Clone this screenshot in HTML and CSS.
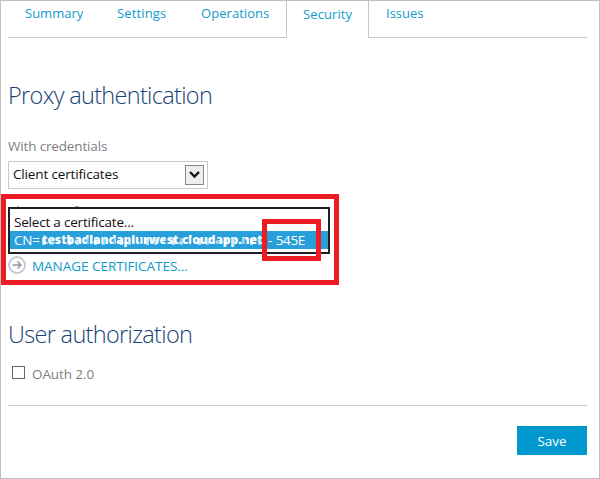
FILE: index.html
```html
<!DOCTYPE html>
<html lang="en">
<head>
<meta charset="utf-8">
<title>Proxy security</title>
<link rel="stylesheet" href="styles.css">
</head>
<body>
<main class="page">
  <nav class="tabs">
    <a class="tab summary">Summary</a>
    <a class="tab settings">Settings</a>
    <a class="tab operations">Operations</a>
    <a class="tab active">Security</a>
    <a class="tab issues">Issues</a>
  </nav>
  <section class="proxy">
    <h1>Proxy authentication</h1>
    <div class="label">With credentials</div>
    <div class="select"><span>Client certificates</span>
      <span class="arrow"><svg width="17" height="18" viewBox="0 0 17 18"><path d="M4 6 8.5 10.500 13 6" fill="none" stroke="#111" stroke-width="2.3"/></svg></span>
    </div>
    <div class="highlight">
      <div class="label cut">Client certificate</div>
      <div class="options">
        <div class="option">Select a certificate...</div>
        <div class="option selected"><span class="cn">CN=</span><span class="redacted">testbadlandapiurwest.cloudapp.net</span><span class="suffix">- 545E</span></div>
        <div class="mark"></div>
      </div>
      <div class="manage">
        <svg width="18" height="18" viewBox="0 0 18 18" fill="none"><circle cx="9" cy="9" r="8" stroke="#c0c8d0" stroke-width="1.8"/><path d="M4.500 9h8M9.500 5.500 13 9l-3.500 3.500" stroke="#8d969f" stroke-width="1.500"/></svg>
        <a>MANAGE CERTIFICATES...</a>
      </div>
    </div>
  </section>
  <section class="user">
    <h1>User authorization</h1>
    <label class="check"><span class="box"></span><span>OAuth 2.0</span></label>
  </section>
  <footer class="footer"><button class="save">Save</button></footer>
</main>
</body>
</html>
```
FILE: styles.css
```css
* { box-sizing: border-box; }
body { margin: 0; background: #fff; font: 13.5px/18px "Open Sans", "Noto Sans", sans-serif; color: #111; }
.page { width: 600px; height: 479px; border: 1px solid #c1c1c1; padding: 0 12px 0 7px; overflow: hidden; }
.tabs { display: flex; height: 37px; border-bottom: 1px solid #c8c8c8; color: #0f9bcb; white-space: nowrap; font-size: 13px; }
.tab { height: 37px; padding-top: 3px; width: 84px; padding-left: 17px; }
.tab.summary { width: 92px; }
.tab.settings { letter-spacing: .15px; }
.tab.operations { width: 102px; letter-spacing: .05px; }
.tab.active { width: 83px; padding: 4px 0 0 16px; background: #fff; border: solid #c8c8c8; border-width: 0 1px; letter-spacing: .1px; }
h1 { margin: 0; color: #184374; font: 300 23.5px/32px "Open Sans", sans-serif; white-space: nowrap; letter-spacing: -.68px; }
.proxy { padding-top: 41px; }
.label { margin-top: 26px; height: 24px; color: #808080; letter-spacing: -.16px; }
.select { display: flex; width: 200px; height: 28px; border: 1px solid #c8c8c8; padding: 3px 3px 0 4px; justify-content: space-between; letter-spacing: -.15px; }
.arrow { width: 19px; height: 20px; border: 1px solid #888; background: #eee; }
.arrow svg { display: block; }
.highlight { width: 338px; height: 91px; margin: 5px 0 0 -7px; border: 5px solid #ed1c24; padding: 0 4px 0 2px; }
.label.cut { height: 8px; margin: 0; line-height: 24px; overflow: hidden; }
.options { position: relative; width: 322px; height: 47px; border: 2px solid #202124; background: #fff; padding-top: 4px; }
.option { height: 18px; padding-left: 4px; white-space: nowrap; letter-spacing: -.2px; }
.option.selected { display: flex; background: #269fdb; color: #fff; }
.cn { width: 28px; }
.redacted { position: relative; width: 224px; height: 18px; font-size: 12px; font-weight: 800; letter-spacing: -.05px; overflow: hidden; }
.redacted::after {
  content: ""; position: absolute; inset: 7px 0 4px;
  background: repeating-linear-gradient(90deg, #ffffffb0 0 3px, #fff0 3px 8px, #bfe4f6b0 8px 11px, #fff0 11px 19px, #269fdb80 19px 21px, #fff0 21px 26px);
}
.suffix { padding-left: 2px; word-spacing: .6px; letter-spacing: -.35px; }
.mark { position: absolute; left: 252px; top: 10px; width: 59px; height: 42px; border: 5px solid #ed1c24; }
.manage { display: flex; gap: 5px; padding-top: 2px; color: #0f9bcb; letter-spacing: -.03px; }
.manage a { padding: 1px 0 0 1px; }
.user { padding-top: 33px; }
.check { display: flex; gap: 7px; height: 21px; margin-top: 15px; padding-left: 4px; color: #808080; letter-spacing: -.1px; }
.box { width: 13px; height: 13px; border: 1px solid #666; margin-top: 1px; }
.footer { display: flex; justify-content: flex-end; margin-top: 19px; border-top: 1px solid #c8c8c8; padding-top: 20px; }
.save { width: 70px; height: 29px; border: 0; background: #0099cf; color: #fff; font: 13.5px/18px "Open Sans", sans-serif; padding: 0; }
```
